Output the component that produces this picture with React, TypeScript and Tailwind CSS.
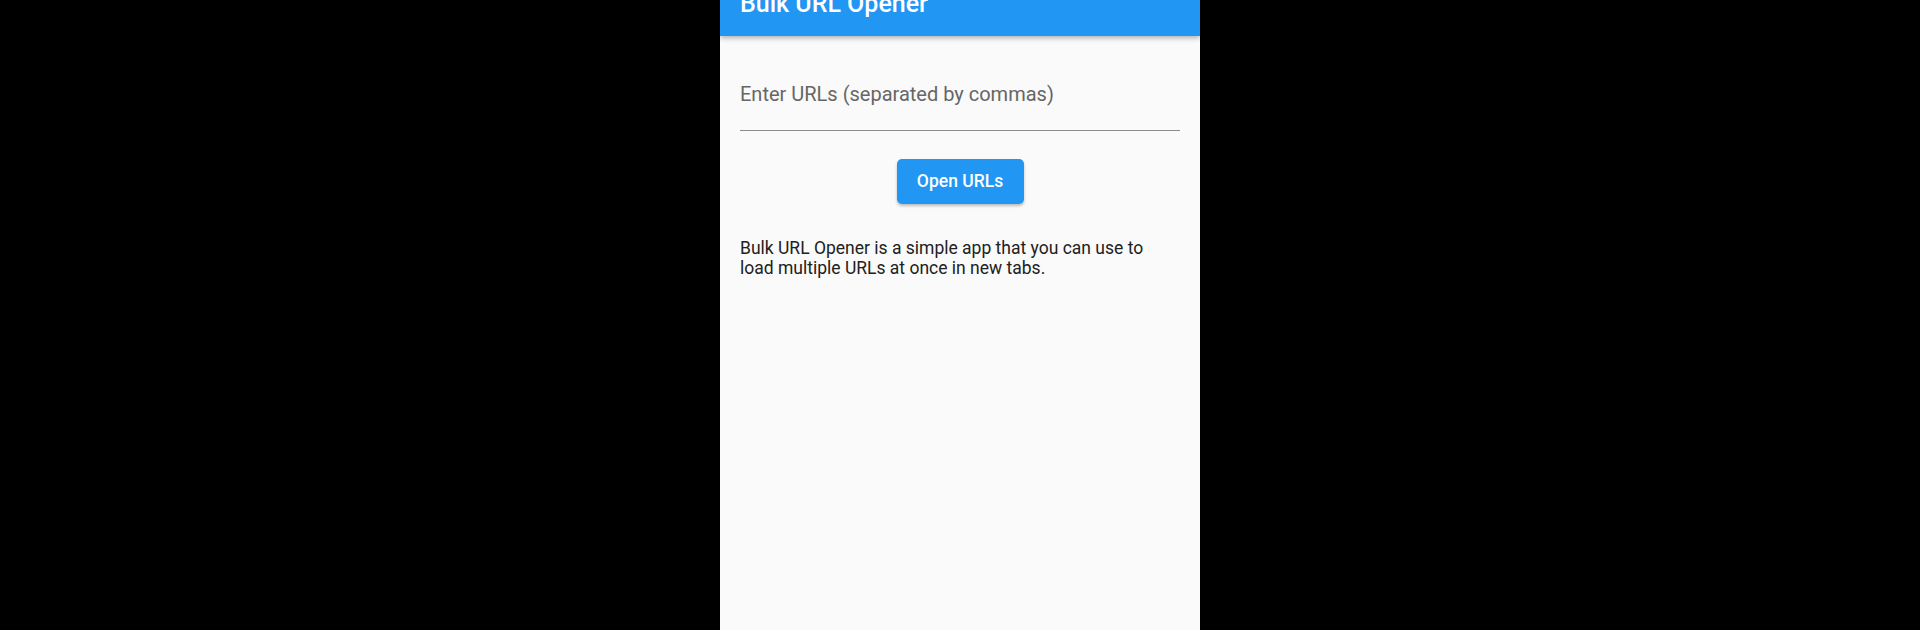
export default function App() {
  return (
    <div className="min-h-screen h-[630px] bg-black flex justify-center font-['Roboto',sans-serif]">
      <div className="w-[480px] h-full bg-[#fafafa] flex flex-col overflow-hidden">
        {/* App bar */}
        <div className="relative z-10 h-[36px] shrink-0 bg-[#2196f3] px-[20px] overflow-hidden shadow-[0_2px_5px_rgba(0,0,0,0.3)]">
          <h1 className="-mt-[9px] text-[25px] leading-[25px] font-medium text-white whitespace-nowrap">
            Bulk URL Opener
          </h1>
        </div>

        <div className="px-[20px] pt-[46px]">
          {/* URL input */}
          <div className="border-b border-[#8c8c8c] pb-[24px]">
            <div className="text-[20px] leading-[24px] text-[#666666]">
              Enter URLs (separated by commas)
            </div>
          </div>

          {/* Button */}
          <div className="flex justify-center pt-[28px]">
            <button className="w-[127px] h-[45px] rounded-[5px] bg-[#2196f3] text-white text-[17.5px] font-medium shadow-[0_2px_3px_rgba(0,0,0,0.25)]">
              Open URLs
            </button>
          </div>

          {/* Description */}
          <p className="pt-[34px] text-[17.5px] leading-[20px] text-[#212121]">
            Bulk URL Opener is a simple app that you can use to load multiple
            URLs at once in new tabs.
          </p>
        </div>
      </div>
    </div>
  );
}
